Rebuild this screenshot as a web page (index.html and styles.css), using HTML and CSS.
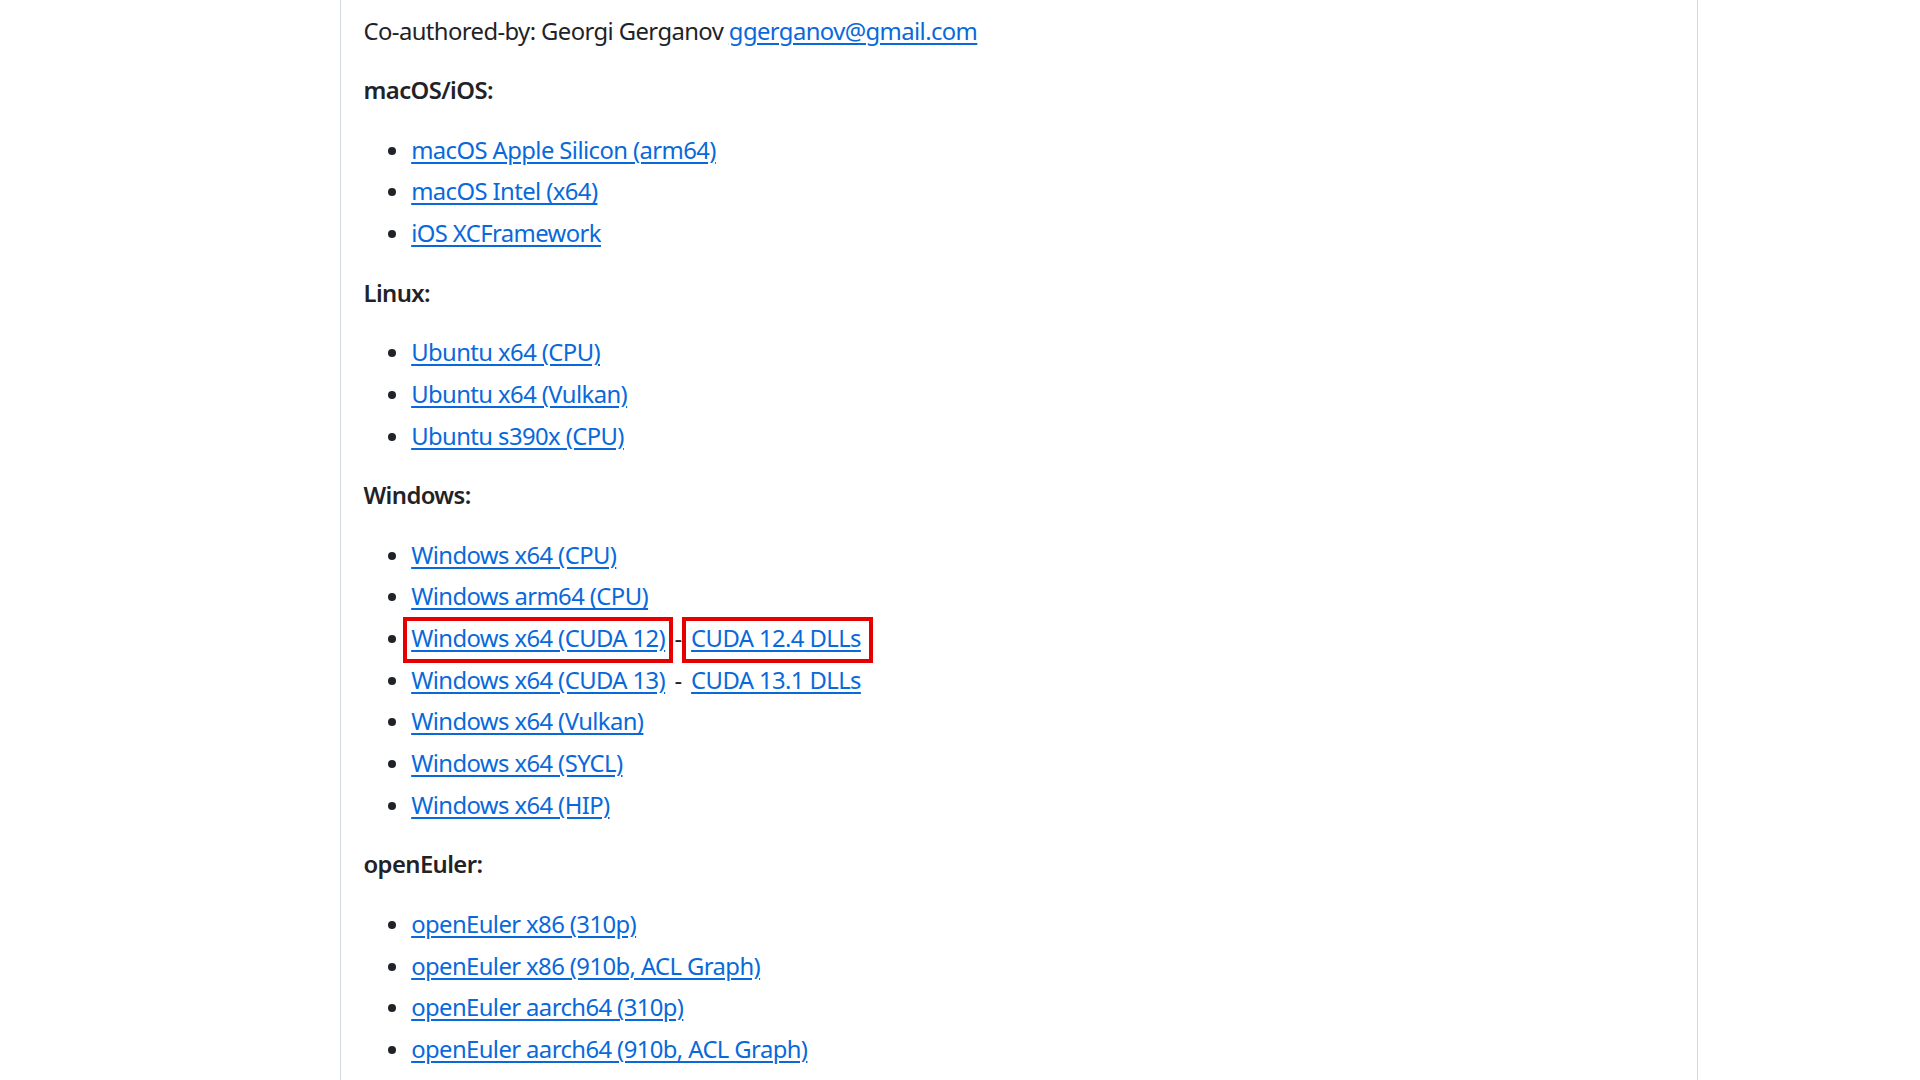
FILE: index.html
```html
<!DOCTYPE html>
<html lang="en">
<head>
<meta charset="utf-8">
<title>Release notes</title>
<link rel="stylesheet" href="styles.css">
</head>
<body>
<main class="release">
  <div class="markdown-body">
    <p>Co-authored-by: Georgi Gerganov <a href="#">ggerganov@gmail.com</a></p>
    <p><strong>macOS/iOS:</strong></p>
    <ul>
      <li><a href="#">macOS Apple Silicon (arm64)</a></li>
      <li><a href="#">macOS Intel (x64)</a></li>
      <li><a href="#">iOS XCFramework</a></li>
    </ul>
    <p><strong>Linux:</strong></p>
    <ul>
      <li><a href="#">Ubuntu x64 (CPU)</a></li>
      <li><a href="#">Ubuntu x64 (Vulkan)</a></li>
      <li><a href="#">Ubuntu s390x (CPU)</a></li>
    </ul>
    <p><strong>Windows:</strong></p>
    <ul>
      <li><a href="#">Windows x64 (CPU)</a></li>
      <li><a href="#">Windows arm64 (CPU)</a></li>
      <li><span class="mark mark-a"><a href="#">Windows x64 (CUDA 12)</a></span><span class="sep"> - </span><span class="mark mark-b"><a href="#">CUDA 12.4 DLLs</a></span></li>
      <li><a href="#">Windows x64 (CUDA 13)</a><span class="sep"> - </span><a href="#">CUDA 13.1 DLLs</a></li>
      <li><a href="#">Windows x64 (Vulkan)</a></li>
      <li><a href="#">Windows x64 (SYCL)</a></li>
      <li><a href="#">Windows x64 (HIP)</a></li>
    </ul>
    <p><strong>openEuler:</strong></p>
    <ul>
      <li><a href="#">openEuler x86 (310p)</a></li>
      <li><a href="#">openEuler x86 (910b, ACL Graph)</a></li>
      <li><a href="#">openEuler aarch64 (310p)</a></li>
      <li><a href="#">openEuler aarch64 (910b, ACL Graph)</a></li>
    </ul>
  </div>
</main>
</body>
</html>
```

FILE: styles.css
```css
html, body {
  margin: 0;
  padding: 0;
  background: #ffffff;
}

body {
  font-family: "Noto Sans", "Open Sans", "Liberation Sans", sans-serif;
  font-size: 23.83px;
  line-height: 1.5;
  letter-spacing: -0.59px;
  color: #1f2328;
}

.release {
  box-sizing: border-box;
  width: 1358px;
  margin-left: 340px;
  min-height: 1080px;
  border-left: 1.5px solid #d1d9e0;
  border-right: 1.5px solid #d1d9e0;
  padding: 13.5px 24px 0 22.5px;
}

.markdown-body p {
  margin: 0 0 1em 0;
}

.markdown-body strong {
  font-weight: 600;
}

.markdown-body ul {
  margin: 0 0 1em 0;
  padding-left: 2em;
  list-style: disc;
}

.markdown-body li + li {
  margin-top: 0.25em;
}

.markdown-body a {
  color: #0969da;
  text-decoration: underline;
  text-decoration-thickness: 1.5px;
  text-underline-offset: 0.2rem;
}

.sep {
  word-spacing: 3.8px;
}

.mark {
  position: relative;
}

.mark::after {
  content: "";
  position: absolute;
  top: calc(50% - 21.5px);
  height: 46px;
  box-sizing: border-box;
  border: 4px solid #e60000;
  pointer-events: none;
}

.mark-a::after {
  left: -8px;
  right: -8px;
}

.mark-b::after {
  left: -9px;
  right: -12px;
}
```
